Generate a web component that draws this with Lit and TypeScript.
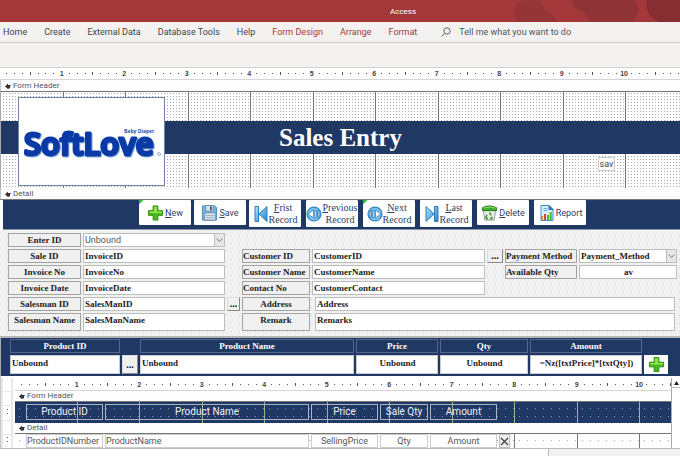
import { LitElement, html, css, svg, nothing } from "lit";
import { customElement, property } from "lit/decorators.js";

const plusIcon = html`<svg viewBox="0 0 18 18" aria-hidden="true">
  <path d="M6.500 1.500h5v5h5v5h-5v5h-5v-5h-5v-5h5z" fill="#46b91e" stroke="#2f8a12" />
  <path d="M7.500 2.500h3v5h5v1.500h-13v-1.500h5z" fill="#93e34f" />
</svg>`;

const saveIcon = html`<svg viewBox="0 0 18 18" aria-hidden="true">
  <path d="M1.500 1.500h13l2 2v13h-15z" fill="#74b4e4" stroke="#4b87ba" />
  <rect x="5" y="1" width="8" height="6" fill="#dbe4ea" stroke="#6d8ba5" />
  <rect x="9.500" y="2" width="2" height="4" fill="#35618c" />
  <rect x="4" y="9" width="11" height="8" fill="#f4f7f9" stroke="#7596b0" />
  <path d="M5 11.500h9M5 13.500h9M5 15.500h9" stroke="#8aa0b2" />
</svg>`;

const blueGradient = (id: string) => svg`<linearGradient id=${id} x1="0" y1="0" x2="1" y2="1">
  <stop offset="0" stop-color="#b5e4fb" /><stop offset="1" stop-color="#1f86d2" />
</linearGradient>`;

const firstIcon = html`<svg viewBox="0 0 14 18" aria-hidden="true">
  <defs>${blueGradient("g")}</defs>
  <path d="M1 1.500h3.500v15h-3.500zM13 1.500v15l-8-7.500z" fill="url(#g)" stroke="#2b7fc0" />
</svg>`;

const lastIcon = html`<svg viewBox="0 0 14 18" aria-hidden="true">
  <defs>${blueGradient("g")}</defs>
  <path d="M9.500 1.500h3.500v15h-3.500zM1 1.500v15l8-7.500z" fill="url(#g)" stroke="#2b7fc0" />
</svg>`;

const prevIcon = html`<svg viewBox="0 0 18 18" aria-hidden="true">
  <circle cx="9" cy="9" r="7.800" fill="#7cc3ee" stroke="#2f86c8" stroke-width="1.500" />
  <path d="M8.500 4.500v9l-6-4.500zM10 5h1.800v8h-1.800zM13 5.500h1.500v7h-1.500z" fill="#fff" stroke="#2776b6" stroke-width=".8" />
</svg>`;

const nextIcon = html`<svg viewBox="0 0 18 18" aria-hidden="true">
  <circle cx="9" cy="9" r="7.800" fill="#7cc3ee" stroke="#2f86c8" stroke-width="1.500" />
  <path d="M9.500 4.500v9l6-4.500zM6.200 5h1.800v8h-1.800zM3.500 5.500h1.500v7h-1.500z" fill="#fff" stroke="#2776b6" stroke-width=".8" />
</svg>`;

const binIcon = html`<svg viewBox="0 0 18 18" aria-hidden="true">
  <path d="M2.500 6h13l-1.500 10.500h-10z" fill="#e9eeea" stroke="#8d9a90" />
  <path d="M1.500 3.500q7.500-4 15 0v3h-15z" fill="#3fae2a" stroke="#237a17" />
  <path d="M3 3.700q6-2 12 0" fill="none" stroke="#8fe070" />
  <path d="M9 8.500l1.800 3M12 13l-1 2h-1.500M7.500 15h-1.500l-.8-2 1.300-2" fill="none" stroke="#3b9a2c" stroke-width="1.700" />
</svg>`;

const reportIcon = html`<svg viewBox="0 0 16 18" aria-hidden="true">
  <path d="M2.500 1.500h8l4 4v11h-12z" fill="#d9effb" stroke="#3c8fcb" />
  <path d="M10.500 1.500v4h4z" fill="#3c8fcb" stroke="#2773ad" />
  <path d="M5 4.500h4M5 6.500h4" stroke="#6aa9d4" />
  <path d="M3.500 12v4" stroke="#e08a2b" stroke-width="2" />
  <path d="M6.500 10v6" stroke="#d2452e" stroke-width="2" />
  <path d="M9.500 11v5" stroke="#4fb52f" stroke-width="2" />
  <path d="M12.200 8v8" stroke="#4fb52f" stroke-width="2" />
</svg>`;

const chevron = html`<svg class="chev" viewBox="0 0 10 10" aria-hidden="true">
  <path d="M2 3.500l3 3 3-3" fill="none" stroke="#6a6a6a" />
</svg>`;

/** Inch ruler: seven ticks and a number for each unit. */
@customElement("inch-ruler")
export class InchRuler extends LitElement {
  static styles = css`
    :host { display: block; overflow: hidden; background: #fff; }
    .units { display: flex; width: 688px; height: 100%; margin-left: 3px; }
    .cell {
      flex: 1 1 0; min-width: 0; display: flex; align-items: center; justify-content: center;
      font: bold 7px/9px "Liberation Sans", sans-serif; color: #444; white-space: nowrap;
    }
    .dot { width: 1px; height: 1px; background: #555; }
    .half { width: 1px; height: 3px; background: #555; }
  `;
  render() {
    return html`<div class="units">
      ${Array.from({ length: 88 }, (_, i) => {
        const k = (i + 1) % 8;
        if (k === 0) return html`<span class="cell">${i < 80 ? (i + 1) / 8 : nothing}</span>`;
        return html`<span class="cell"><i class=${k === 4 ? "half" : "dot"}></i></span>`;
      })}
    </div>`;
  }
}

/** Designer grid: one cell an inch, with a line at its right edge. */
@customElement("inch-grid")
export class InchGrid extends LitElement {
  @property({ reflect: true }) tone = "fine";
  static styles = css`
    :host { display: block; overflow: hidden; --paper: #fff; --dot: #aaa; --step: 8px; --rest: 7px; --line: #777; }
    :host([tone="fine"]) { --step: 3px; --rest: 2px; }
    :host([tone="navy"]) { --paper: #203864; --dot: #8595ad; --line: #a3b294; }
    .units { display: flex; width: 688px; height: 100%; }
    .unit { flex: 1 1 0; box-sizing: border-box; border-right: 1px solid var(--line);
      background:
        linear-gradient(90deg, var(--paper) var(--rest), transparent var(--rest)) -3px -1px / var(--step) var(--step),
        linear-gradient(var(--paper) var(--rest), var(--dot) var(--rest)) -3px -1px / var(--step) var(--step); }
  `;
  render() {
    return html`<div class="units">${Array.from({ length: 11 }, () => html`<div class="unit"></div>`)}</div>`;
  }
}

interface Action { key: string; rest: string; line2?: string; icon: unknown; cls: string; }

const actions: Action[] = [
  { key: "N", rest: "ew", icon: plusIcon, cls: "flag" },
  { key: "S", rest: "ave", icon: saveIcon, cls: "" },
  { key: "F", rest: "rist", line2: "Record", icon: firstIcon, cls: "two" },
  { key: "P", rest: "revious", line2: "Record", icon: prevIcon, cls: "two" },
  { key: "N", rest: "ext", line2: "Record", icon: nextIcon, cls: "two flag" },
  { key: "L", rest: "ast", line2: "Record", icon: lastIcon, cls: "two" },
  { key: "D", rest: "elete", icon: binIcon, cls: "spaced" },
  { key: "", rest: "Report", icon: reportIcon, cls: "spaced" },
];

@customElement("app-root")
export class AppRoot extends LitElement {
  static styles = css`
    :host {
      display: block; min-height: 100vh; background: #fff; color: #1c1c1c; overflow: hidden;
      --sans: Roboto, "Noto Sans", sans-serif;
      --serif: "Liberation Serif", serif;
      --navy: #203864;
      font: 9px/12px var(--sans);
    }
    * { box-sizing: border-box; }
    button, input, select { font: inherit; color: inherit; margin: 0; padding: 0; min-width: 0; border-radius: 0; }
    button { display: flex; align-items: center; justify-content: center; border: 0; background: none; white-space: nowrap; }
    svg { display: block; flex: none; }

    .title { display: grid; height: 22px; background: #a4373a; color: #fff; overflow: hidden; }
    .title > * { grid-area: 1 / 1; }
    .title .blobs { justify-self: end; width: 180px; height: 22px; }
    .title .name { margin: 6px 0 0 390px; font-size: 8px; }
    .tabs { display: flex; align-items: center; gap: 17px; height: 21px; padding-left: 3px;
      background: #f3f2f1; border-bottom: 1px solid #cfcdcb; color: #444; }
    .tabs .ctx { color: #a4373a; }
    .tell { display: flex; align-items: center; gap: 8px; margin-left: 7px; color: #555; }
    .tell svg { width: 10px; height: 10px; }
    .ribbon { height: 25px; background: #f3f2f1; border-bottom: 1px solid #d2d0ce; }
    .main-ruler { height: 12px; border-bottom: 1px solid #d6d6d6; }
    .section { display: flex; align-items: center; gap: 2px; height: 12px; padding-left: 4px;
      background: #fdfdfd; color: #555; font-size: 8px; border-bottom: 1px solid #777; border-left: 1px solid #c8c8c8; }
    .section svg { width: 6px; height: 6px; }

    .header { display: grid; height: 96px; border-left: 1px solid #aaa; }
    .header > * { grid-area: 1 / 1; min-width: 0; }
    .band { align-self: start; margin: 29px 0 0; height: 33px; background: var(--navy); color: #fff;
      font: bold 25px/34px var(--serif); padding-left: 278px; }
    .logo { justify-self: start; align-self: start; width: 147px; height: 89px; margin: 5px 0 0 17px;
      background: #fff; border: 1px solid #7385a6; }
    .logo svg { width: 145px; height: 87px; }
    .logo .big { font: 600 31px "Open Sans", sans-serif; stroke-linejoin: round; filter: drop-shadow(1px 1px 0 #86aede); }
    .logo .small { font: bold 5px "Open Sans", sans-serif; fill: #2452ab; }
    .sav { justify-self: end; align-self: end; margin: 0 65px 17px 0; width: 17px; height: 14px;
      background: #fff; border: 1px solid #ccc; color: #444; }

    .toolbar { display: flex; gap: 3px; height: 30px; padding-left: 136px; margin-left: 3px;
      background: var(--navy); color: #2b3f68; border-bottom: 1px solid #8b97ab; }
    .toolbar button { width: 52px; height: 25px; background: #fff; gap: 1px; border-radius: 1px; }
    .toolbar svg { height: 18px; width: 17px; }
    .toolbar .two { height: 27px; font: 10px/12px var(--serif); gap: 0; margin-right: 2px; }
    .toolbar .two svg { width: 16px; }
    .toolbar .spaced { margin-right: 2px; }
    .toolbar .flag { background: linear-gradient(135deg, #2fd12f 3px, #fff 3px); }

    .form { display: grid; gap: 2px; padding: 3px 3px 5px 8px; border-bottom: 2px solid #b4b6b8;
      grid-template-columns: 73px 142px 13px 68px 173px 16px 72px minmax(0, 1fr);
      grid-template-rows: repeat(5, 14px) 18px; font: bold 9px/12px var(--serif);
      background:
        linear-gradient(90deg, #f1f1f1 7px, transparent 7px) 0 -2px / 8px 8px,
        linear-gradient(#f1f1f1 7px, #cfcfcf 7px) 0 -2px / 8px 8px; }
    .form label { border: 1px solid #a3a3a3; background: #f0f0f0; text-align: center; white-space: nowrap; }
    .form label.start { text-align: left; }
    .form input, .combo { border: 1px solid #bdbdbd; background: #fff; padding-left: 1px; width: 100%; height: 100%; }
    .form input.tall { padding-bottom: 4px; }
    .combo { display: flex; }
    .combo select { flex: 1; border: 0; background: none; appearance: none; }
    .combo.plain { font: 9px/12px var(--sans); color: #555; }
    .chev { width: 10px; height: 100%; background: #e6e6e6; border-left: 1px solid #bbb; pointer-events: none; }
    .more { background: #f0f0f0; border: 1px solid #ddd; border-right-color: #888; border-bottom-color: #888;
      font: bold 10px/10px var(--serif); color: #111; }
    .form .long { grid-column: 5 / 9; margin: 0 2px 0 3px; width: auto; }
    .form .mid, .mid { text-align: center; }

    .entry { display: grid; gap: 2px; height: 38px; padding: 1px 10px 2px 9px; background: var(--navy);
      border-left: 1px solid #aaa; font: bold 9px/12px var(--serif);
      grid-template-columns: 110px 16px 214px 82px 88px 112px 24px; grid-template-rows: 14px 19px; }
    .entry label { border: 1px solid #56658a; color: #fff; text-align: center; }
    .entry input { border: 1px solid #ccc; background: #fff; padding-bottom: 3px; width: 100%; padding-left: 1px; }
    .entry .add { background: #fff; }
    .entry .add svg { width: 17px; height: 17px; }

    .sub { display: grid; grid-template-columns: 14px minmax(0, 1fr) 9px; padding-top: 2px;
      border-bottom: 1px solid #bbb; border-left: 1px solid #c8c8c8; }
    .side { display: flex; flex-direction: column; background: #e8e8e8; padding: 0 2px; gap: 1px; margin-right: 2px; }
    .side i { background: #fff; flex: 1; display: flex; align-items: center; justify-content: center; }
    .side .on::after { content: ""; width: 1px; height: 1px; background: #555; box-shadow: 0 -4px #555; }
    .sub-ruler { height: 13px; border-bottom: 1px solid #d6d6d6; }
    .sub .section { border-left: 0; height: 11px; }
    .stack { display: grid; }
    .stack > * { grid-area: 1 / 1; }
    .cols { display: grid; column-gap: 2px; padding-left: 11px; z-index: 1;
      grid-template-columns: 77px 204px 67px 48px 67px 11px; }
    .heads { height: 21px; background: var(--navy); font-size: 10px; }
    .heads .cols { padding-top: 2px; padding-bottom: 3px; color: #eef1f6; }
    .heads label { border: 1px solid #aab4c6; text-align: center; line-height: 14px; }
    .fields { height: 14px; overflow: hidden; }
    .fields input { border: 1px solid #ccc; background: #fff; color: #555; width: 100%; height: 14px; font-size: 9px; }
    .fields .x { background: #eee; border: 1px solid #bbb; }
    .fields .x svg { width: 9px; height: 9px; }
    .scroll { border-left: 1px solid #aaa; background: #fff; }
    .scroll button { width: 100%; height: 10px; border-bottom: 1px solid #bbb; }
    .scroll svg { width: 5px; height: 4px; }
    .foot { display: flex; justify-content: flex-end; height: 7px; }
    .foot i { width: 132px; background: #f2f2f2; border-left: 1px solid #bbb; }
  `;

  private section(name: string) {
    return html`<div class="section">
      <svg viewBox="0 0 6 6" aria-hidden="true"><path d="M0 3.500L3 .5v1.500h3l-1 1.500v1.500l-2 1z" fill="#333" /></svg>${name}
    </div>`;
  }

  private field(id: string, label: string, value: string, col: number, row: number, cls = "", lcls = "") {
    return html`
      <label for=${id} class=${lcls} style="grid-area:${row} / ${col}">${label}</label>
      <input id=${id} class=${cls} .value=${value} style=${cls.includes("long") ? `grid-row:${row}` : `grid-area:${row} / ${col + 1}`} />`;
  }

  render() {
    return html`
      <header class="title">
        <svg class="blobs" viewBox="0 0 180 22" aria-hidden="true">
          <path d="M18 22a15 15 0 0 1 0-20q10-4 22 0 6 5 4 10 10 0 13 10z" fill="#963538" />
          <path d="M72 0h62q10 12-2 22H90q-6-12-16-14z" fill="#8c3336" opacity=".85" />
          <path d="M147 0h33v22h-22q-14-8-11-22z" fill="#852f33" />
        </svg>
        <span class="name">Access</span>
      </header>
      <nav class="tabs">
        ${["Home", "Create", "External Data", "Database Tools", "Help"].map((t) => html`<button>${t}</button>`)}
        ${["Form Design", "Arrange", "Format"].map((t) => html`<button class="ctx">${t}</button>`)}
        <button class="tell">
          <svg viewBox="0 0 10 10" aria-hidden="true"><circle cx="6" cy="4" r="3.200" fill="none" stroke="#666" /><path d="M3.700 6.300L.5 9.500" stroke="#666" /></svg>
          Tell me what you want to do
        </button>
      </nav>
      <div class="ribbon"></div>
      <inch-ruler class="main-ruler"></inch-ruler>
      ${this.section("Form Header")}
      <div class="header">
        <inch-grid></inch-grid>
        <div class="band">Sales Entry</div>
        <div class="logo">
          <svg viewBox="0 0 145 87" role="img" aria-label="SoftLove Baby Diaper">
            <text class="big" x="5" y="57" fill="#0b3aa6" stroke="#0b3aa6" stroke-width="3">SoftLove</text>
            <text class="small" x="105" y="35">Baby Diaper</text>
            <circle cx="140" cy="56" r="1.500" fill="none" stroke="#7d9cd0" stroke-width=".8" />
          </svg>
        </div>
        <button class="sav">sav</button>
      </div>
      ${this.section("Detail")}
      <div class="toolbar">
        ${actions.map((a) => html`<button class=${a.cls}>${a.icon}<span>${a.key ? html`<u>${a.key}</u>` : nothing}${a.rest}${a.line2 ? html`<br />${a.line2}` : nothing}</span></button>`)}
      </div>
      <div class="form">
        <label for="enter">Enter ID</label>
        <div class="combo plain"><select id="enter"><option>Unbound</option></select>${chevron}</div>
        ${this.field("sale", "Sale ID", "InvoiceID", 1, 2)}
        ${this.field("invno", "Invoice No", "InvoiceNo", 1, 3)}
        ${this.field("invdate", "Invoice Date", "InvoiceDate", 1, 4)}
        ${this.field("smid", "Salesman ID", "SalesManID", 1, 5)}
        ${this.field("smname", "Salesman Name", "SalesManName", 1, 6, "tall")}
        <button class="more" style="grid-area:5 / 3">...</button>
        ${this.field("cid", "Customer ID", "CustomerID", 4, 2, "", "start")}
        ${this.field("cname", "Customer Name", "CustomerName", 4, 3, "", "start")}
        ${this.field("cno", "Contact No", "CustomerContact", 4, 4, "", "start")}
        ${this.field("addr", "Address", "Address", 4, 5, "long")}
        ${this.field("remark", "Remark", "Remarks", 4, 6, "long tall")}
        <button class="more" style="grid-area:2 / 6">...</button>
        <label for="pay" class="start" style="grid-area:2 / 7">Payment Method</label>
        <div class="combo" style="grid-area:2 / 8"><select id="pay"><option>Payment_Method</option></select>${chevron}</div>
        ${this.field("avail", "Available Qty", "av", 7, 3, "mid", "start")}
      </div>
      <div class="entry">
        <label for="pid">Product ID</label><span></span>
        <label for="pname">Product Name</label>
        <label for="price">Price</label>
        <label for="qty">Qty</label>
        <label for="amount">Amount</label><span></span>
        <input id="pid" .value=${"Unbound"} />
        <button class="more">...</button>
        <input id="pname" .value=${"Unbound"} />
        <input id="price" class="mid" .value=${"Unbound"} />
        <input id="qty" class="mid" .value=${"Unbound"} />
        <input id="amount" class="mid" .value=${"=Nz([txtPrice]*[txtQty])"} />
        <button class="add" aria-label="Add">${plusIcon}</button>
      </div>
      <div class="sub">
        <div class="side"><i></i><i></i><i class="on"></i><i></i><i class="on"></i></div>
        <div>
          <inch-ruler class="sub-ruler"></inch-ruler>
          ${this.section("Form Header")}
          <div class="stack heads">
            <inch-grid tone="navy"></inch-grid>
            <div class="cols">
              <label for="s1">Product ID</label>
              <label for="s2">Product Name</label>
              <label for="s3">Price</label>
              <label for="s4">Sale Qty</label>
              <label for="s5">Amount</label>
            </div>
          </div>
          ${this.section("Detail")}
          <div class="stack fields">
            <inch-grid tone="wide"></inch-grid>
            <div class="cols">
              <input id="s1" .value=${"ProductIDNumber"} />
              <input id="s2" .value=${"ProductName"} />
              <input id="s3" class="mid" .value=${"SellingPrice"} />
              <input id="s4" class="mid" .value=${"Qty"} />
              <input id="s5" class="mid" .value=${"Amount"} />
              <button class="x" aria-label="Remove"><svg viewBox="0 0 9 9" aria-hidden="true"><path d="M1 1l7 7M8 1L1 8" stroke="#444" stroke-width="1.300" /></svg></button>
            </div>
          </div>
        </div>
        <div class="scroll"><button aria-label="Scroll up"><svg viewBox="0 0 5 4" aria-hidden="true"><path d="M0 4L2.500 0 5 4z" fill="#222" /></svg></button></div>
      </div>
      <div class="foot"><i></i></div>
    `;
  }
}
